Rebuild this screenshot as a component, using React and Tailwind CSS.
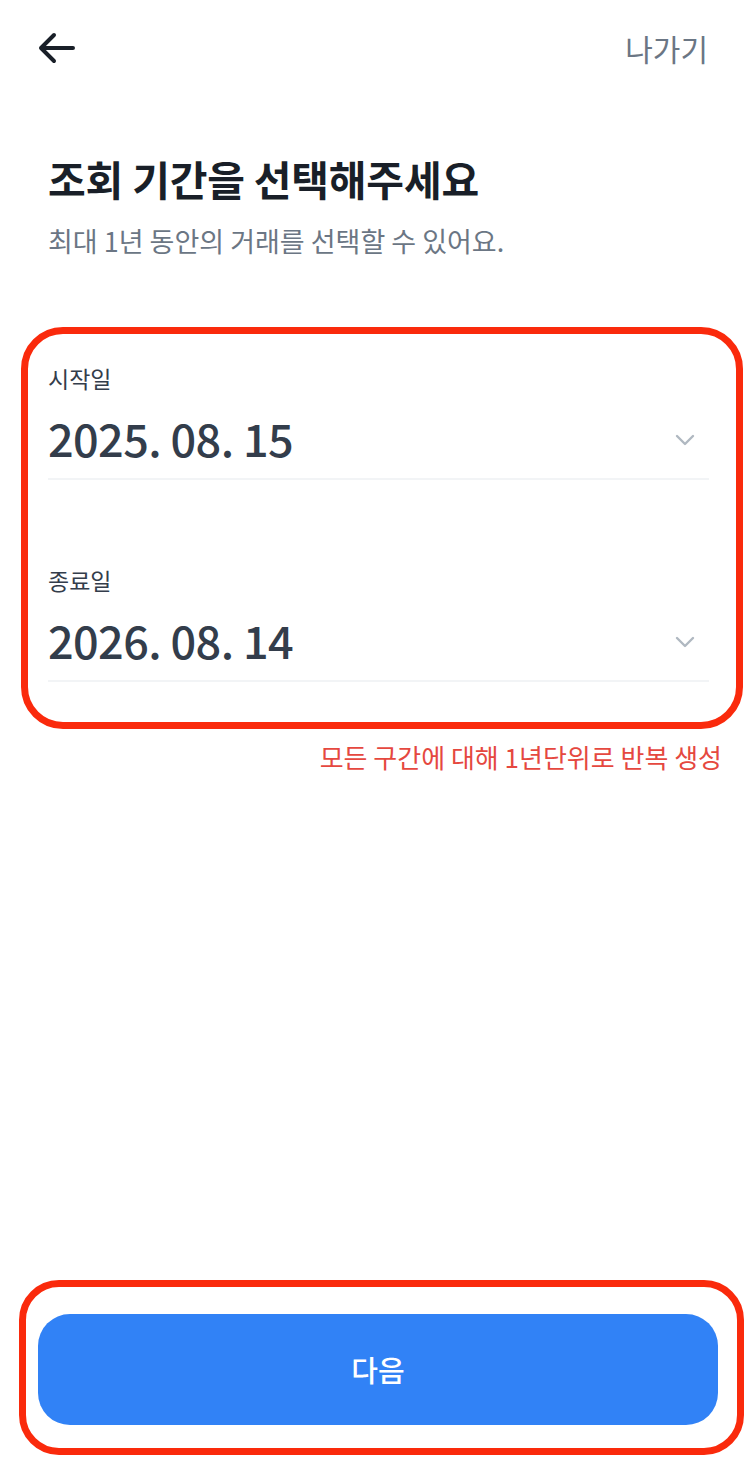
import React from 'react';

const font = { fontFamily: '"Noto Sans CJK KR", "Noto Sans", sans-serif' };

function BackArrow() {
  return (
    <svg width="38" height="34" viewBox="0 0 38 34" fill="none">
      <path d="M36 17H4M17 4L4 17L17 30" stroke="#191f28" strokeWidth="4" strokeLinecap="round" strokeLinejoin="round" />
    </svg>
  );
}

function Chevron() {
  return (
    <svg width="20" height="12" viewBox="0 0 20 12" fill="none">
      <path d="M2 2L10 10L18 2" stroke="#b0b8c1" strokeWidth="2.4" strokeLinecap="round" strokeLinejoin="round" />
    </svg>
  );
}

function DateField({ label, value, top }) {
  return (
    <div className={top}>
      <div className="text-[23px] leading-[30px] text-[#333d4b]">{label}</div>
      <div className="mt-[17px] flex items-center justify-between">
        <div className="text-[45px] leading-[56px] font-medium text-[#333d4b] tracking-[-0.6px]">{value}</div>
        <div className="mr-[14px] mt-[4px]">
          <Chevron />
        </div>
      </div>
      <div className="mt-[12px] h-[2px] bg-[#f2f4f6]" />
    </div>
  );
}

export default function App() {
  return (
    <div className="min-h-screen flex flex-col bg-white" style={font}>
      <div className="h-[96px] flex items-center justify-between pl-[37px] pr-[48px]">
        <BackArrow />
        <div className="text-[30px] text-[#6b7684]">나가기</div>
      </div>

      <div className="px-[48px] mt-[56px]">
        <div className="text-[41px] leading-[52px] font-bold text-[#191f28] tracking-[-0.2px]">조회 기간을 선택해주세요</div>
        <div className="mt-[19px] text-[27px] leading-[36px] text-[#6b7684]">최대 1년 동안의 거래를 선택할 수 있어요.</div>
      </div>

      <div className="mt-[68px] ml-[21px] mr-[13px] border-[7px] border-[#fa2a0c] rounded-[42px] pl-[20px] pr-[27px] pt-[29px] pb-[40px]">
        <DateField label="시작일" value="2025. 08. 15" top="" />
        <DateField label="종료일" value="2026. 08. 14" top="mt-[85px]" />
      </div>

      <div className="mt-[12px] pr-[34px] text-right text-[26px] leading-[32px] text-[#e5483f]">
        모든 구간에 대해 1년단위로 반복 생성
      </div>

      <div className="flex-1" />

      <div className="mb-[6px] ml-[19px] mr-[12px] border-[7px] border-[#fa2a0c] rounded-[40px] pl-[12px] pr-[19px] pt-[27px] pb-[23px]">
        <button className="w-full h-[111px] rounded-[32px] bg-[#3182f6] text-white text-[29px] font-medium">다음</button>
      </div>
    </div>
  );
}
